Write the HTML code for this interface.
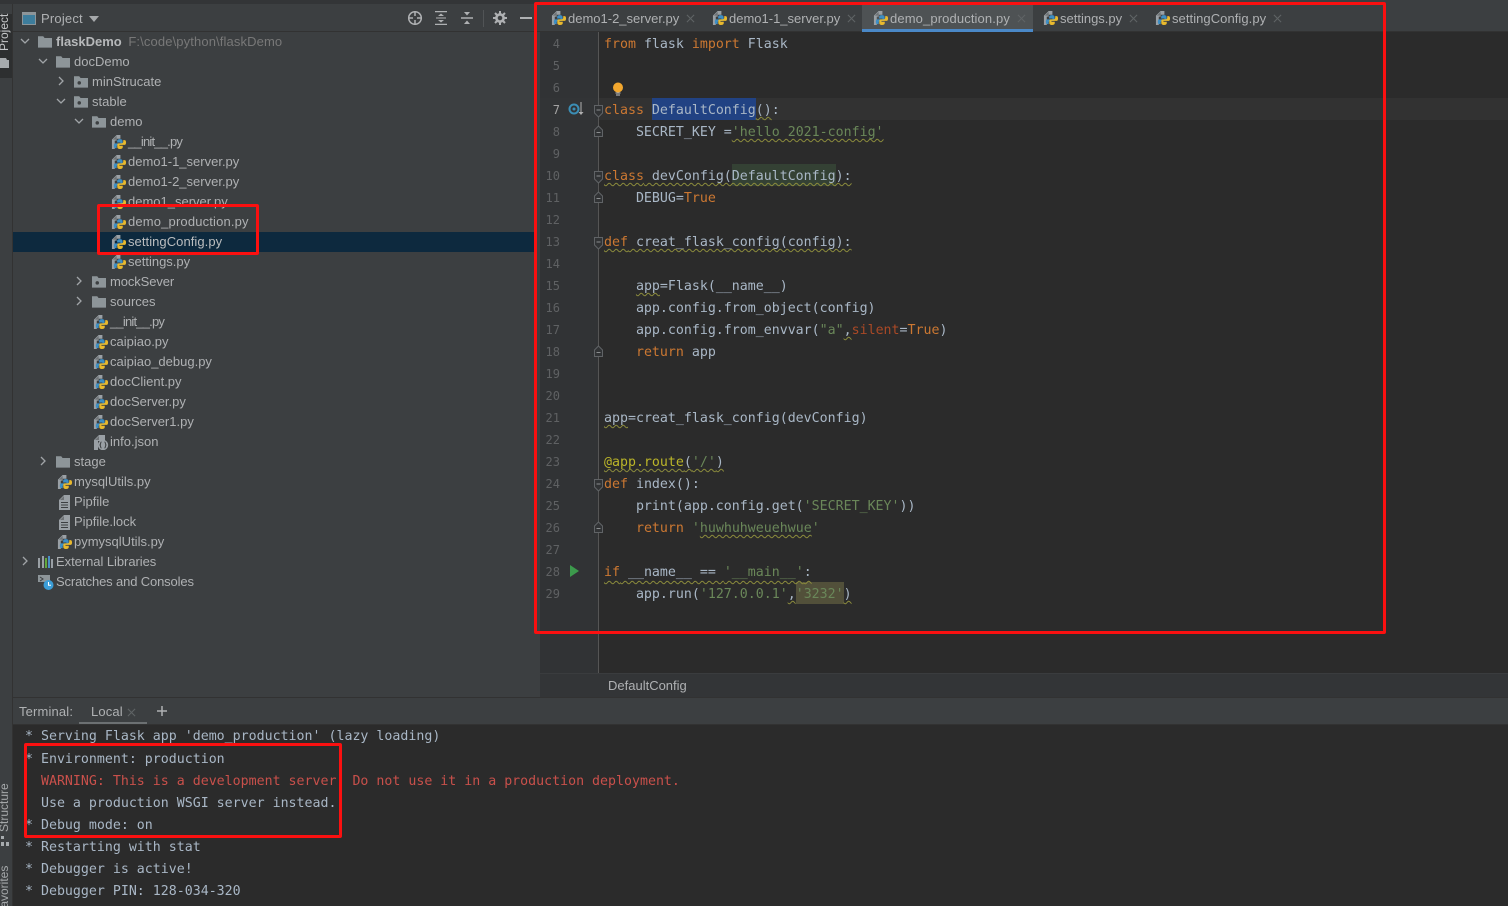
<!DOCTYPE html>
<html><head><meta charset="utf-8"><style>
html,body{margin:0;padding:0;background:#3c3f41}
#r{position:relative;width:1508px;height:906px;overflow:hidden;background:#3c3f41;font-family:"Liberation Sans","Noto Sans CJK SC",sans-serif;font-size:13px;color:#afb1b3}
#r div,#r svg{position:absolute}
.b{left:0;top:0}
.t{white-space:pre;height:20px;line-height:20px;letter-spacing:0;margin-top:1px}
.c{white-space:pre;height:22px;line-height:22px;font-family:"DejaVu Sans Mono","Liberation Mono",monospace;font-size:13.28px;color:#a9b7c6;left:604px;margin-top:2px}
.n{white-space:pre;height:22px;line-height:22px;font-family:"DejaVu Sans Mono","Liberation Mono",monospace;font-size:12px;color:#5f6163;width:20px;text-align:right;left:540px;margin-top:1px}
.m{white-space:pre;height:22px;line-height:22px;font-family:"DejaVu Sans Mono","Liberation Mono",monospace;font-size:13.28px;color:#a9b7c6;left:25px;margin-top:2px}
i{font-style:normal}
.k{color:#cc7832}.s{color:#6a8759}.d{color:#bbb529}.p{color:#aa4926}
.w{text-decoration:underline wavy #8c8c3c 1px;text-underline-offset:2px;text-decoration-skip-ink:none}
.e{color:#c9504b}
</style></head><body><div id="r">
<svg width="0" height="0" class="b"><defs>
<symbol id="py" viewBox="0 0 17 17"><path d="M1 6l5-5h4v4H6v2H4v9H1z" fill="#9aa0a5"/><path d="M2 6h4V2z" fill="#6e7275"/><path d="M9.500 5.500c-2 0-3 .7-3 2V9H10v1H4.500c-.9 0-1.500.9-1.500 2.500S3.600 15 4.500 15H6v-1.800c0-1 .8-1.700 1.800-1.700h3c.9 0 1.500-.7 1.500-1.500V7.500c0-1.300-1.300-2-2.800-2z" fill="#3d8ec4"/><path d="M9.500 16c2 0 3-.7 3-2v-1.500H9v-1h5.500c.9 0 1.500-.9 1.500-2.500s-.6-2.500-1.500-2.500H13v1.800c0 1-.8 1.700-1.800 1.700h-3c-.9 0-1.500.7-1.500 1.500V14c0 1.300 1.300 2 2.800 2z" fill="#e8b92e"/></symbol>
<symbol id="f" viewBox="0 0 16 14"><path d="M0 1h6l1.500 2H16v11H0z" fill="#8d9599"/></symbol>
<symbol id="pk" viewBox="0 0 16 14"><path d="M0 1h6l1.500 2H16v11H0z" fill="#8d9599"/><circle cx="6" cy="8.500" r="2" fill="#3c3f41"/></symbol>
<symbol id="doc" viewBox="0 0 16 16"><path d="M2 6l5-5h6v15H2z" fill="#9aa0a5"/><path d="M3 6h4V2z" fill="#6e7275"/><path d="M4 8h7v1H4zM4 10.500h7v1H4zM4 13h7v1H4z" fill="#3c3f41"/></symbol>
<symbol id="js" viewBox="0 0 16 16"><path d="M1 6l5-5h6v6H5v9H1z" fill="#9aa0a5"/><path d="M2 6h4V2z" fill="#6e7275"/><circle cx="10" cy="11" r="5.200" fill="#9aa0a5"/><path d="M8.500 8c-1.300 0-.6 2.400-1.500 3 .9.600.2 3 1.500 3M11.500 8c1.300 0 .6 2.400 1.500 3-.9.600-.2 3-1.500 3" fill="none" stroke="#3c3f41"/></symbol>
<symbol id="dn" viewBox="0 0 10 10"><path d="M1 3l4 4 4-4" fill="none" stroke="#a0a4a7" stroke-width="1.300"/></symbol>
<symbol id="rt" viewBox="0 0 10 10"><path d="M3 1l4 4-4 4" fill="none" stroke="#a0a4a7" stroke-width="1.300"/></symbol>
<symbol id="x" viewBox="0 0 10 10"><path d="M1 1l8 8M9 1L1 9" stroke="#5f6365" stroke-width="1.200"/></symbol>
<symbol id="fo" viewBox="0 0 12 13"><path d="M1.500 5l4-4 4 4v6.500h-8z" fill="#313335" stroke="#606366"/><path d="M3.500 7.500h4" stroke="#8a8d8f"/></symbol>
<symbol id="fc" viewBox="0 0 12 13"><path d="M1.500 8l4 4 4-4V.5h-8z" fill="#313335" stroke="#606366"/><path d="M3.500 5h4" stroke="#8a8d8f"/></symbol>
</defs></svg>

<!-- left stripe -->
<div style="left:0;top:0;width:12px;height:906px;background:#3c3f41;border-right:1px solid #323232"></div>
<div style="left:0;top:14px;width:12px;height:64px;background:#2d2f30"></div>
<div style="left:-3px;top:51px;transform:rotate(-90deg);transform-origin:0 0;color:#c4c6c8;font-size:12px;line-height:15px;white-space:pre">Project</div>
<svg style="left:0;top:57px" width="9" height="11" viewBox="0 0 9 11"><path d="M0 1h6l1 2h2v8H0z" fill="#a6aaad"/></svg>
<div style="left:-3px;top:832px;transform:rotate(-90deg);transform-origin:0 0;color:#a5a8aa;font-size:12px;line-height:15px;white-space:pre">Structure</div>
<svg style="left:1px;top:836px" width="8" height="10" viewBox="0 0 8 10"><path d="M0 0h3v3H0zM0 6h3v4H0zM5 6h3v4H5z" fill="#a6aaad"/></svg>
<div style="left:-3px;top:915px;transform:rotate(-90deg);transform-origin:0 0;color:#a5a8aa;font-size:12px;line-height:15px;white-space:pre">Favorites</div>
<div style="left:0;top:0;width:540px;height:4px;background:#333537"></div>

<!-- project header -->
<div style="left:13px;top:31px;width:527px;height:1px;background:#323232"></div>
<svg style="left:22px;top:12px" width="14" height="13" viewBox="0 0 14 13"><rect x=".5" y=".5" width="13" height="12" fill="#3d7d9c" stroke="#8d9599"/><rect x="1" y="1" width="12" height="2" fill="#8d9599"/></svg>
<div class="t" style="left:41px;top:8px;letter-spacing:.2px">Project</div>
<svg style="left:89px;top:16px" width="10" height="6" viewBox="0 0 10 6"><path d="M0 0h10L5 6z" fill="#a6a9ab"/></svg>
<svg style="left:407px;top:10px" width="16" height="16" viewBox="0 0 16 16"><circle cx="8" cy="8" r="6.300" fill="none" stroke="#afb1b3" stroke-width="1.500"/><path d="M8 1v5M8 10v5M1 8h5M10 8h5" stroke="#afb1b3" stroke-width="1.500"/></svg>
<svg style="left:435px;top:11px" width="12" height="14" viewBox="0 0 12 14"><path d="M0 .5h12M0 13.500h12" stroke="#afb1b3" stroke-width="1.500"/><path d="M3 5l3-2.500L9 5zM3 9l3 2.500L9 9z" fill="#afb1b3"/><path d="M1 7h10" stroke="#afb1b3"/></svg>
<svg style="left:461px;top:11px" width="12" height="14" viewBox="0 0 12 14"><path d="M0 7h12" stroke="#afb1b3" stroke-width="1.500"/><path d="M3 1l3 3.500L9 1zM3 13l3-3.500L9 13z" fill="#afb1b3"/></svg>
<div style="left:483px;top:10px;width:1px;height:17px;background:#515456"></div>
<svg style="left:493px;top:11px" width="14" height="14" viewBox="0 0 14 14"><circle cx="7" cy="7" r="3.600" fill="none" stroke="#afb1b3" stroke-width="2.600"/><path d="M7 0v3M7 11v3M0 7h3M11 7h3M2 2l2 2M10 10l2 2M12 2l-2 2M4 10l-2 2" stroke="#afb1b3" stroke-width="2"/></svg>
<div style="left:520px;top:17px;width:12px;height:2px;background:#afb1b3"></div>

<!-- tree -->
<div style="left:13px;top:232px;width:524px;height:20px;background:#0d293e"></div>
<svg style="left:20px;top:36px" width="10" height="10"><use href="#dn"/></svg>
<svg style="left:38px;top:35px" width="14" height="13"><use href="#f"/></svg>
<div class="t" style="left:56px;top:31px"><b style="color:#b6b8ba;letter-spacing:0">flaskDemo</b> <span style="color:#787878;letter-spacing:.12px;margin-left:3px">F:\code\python\flaskDemo</span></div>
<svg style="left:38px;top:56px" width="10" height="10"><use href="#dn"/></svg>
<svg style="left:56px;top:55px" width="14" height="13"><use href="#f"/></svg>
<div class="t" style="left:74px;top:51px">docDemo</div>
<svg style="left:56px;top:76px" width="10" height="10"><use href="#rt"/></svg>
<svg style="left:74px;top:75px" width="14" height="13"><use href="#pk"/></svg>
<div class="t" style="left:92px;top:71px">minStrucate</div>
<svg style="left:56px;top:96px" width="10" height="10"><use href="#dn"/></svg>
<svg style="left:74px;top:95px" width="14" height="13"><use href="#pk"/></svg>
<div class="t" style="left:92px;top:91px">stable</div>
<svg style="left:74px;top:116px" width="10" height="10"><use href="#dn"/></svg>
<svg style="left:92px;top:115px" width="14" height="13"><use href="#pk"/></svg>
<div class="t" style="left:110px;top:111px">demo</div>
<svg style="left:111px;top:134px" width="16" height="16"><use href="#py"/></svg>
<div class="t" style="left:128px;top:131px;letter-spacing:-.8px">__init__.py</div>
<svg style="left:111px;top:154px" width="16" height="16"><use href="#py"/></svg>
<div class="t" style="left:128px;top:151px">demo1-1_server.py</div>
<svg style="left:111px;top:174px" width="16" height="16"><use href="#py"/></svg>
<div class="t" style="left:128px;top:171px">demo1-2_server.py</div>
<svg style="left:111px;top:194px" width="16" height="16"><use href="#py"/></svg>
<div class="t" style="left:128px;top:191px">demo1_server.py</div>
<svg style="left:111px;top:214px" width="16" height="16"><use href="#py"/></svg>
<div class="t" style="left:128px;top:211px;letter-spacing:.16px">demo_production.py</div>
<svg style="left:111px;top:234px" width="16" height="16"><use href="#py"/></svg>
<div class="t" style="left:128px;top:231px;color:#bbbdbf;letter-spacing:.06px">settingConfig.py</div>
<svg style="left:111px;top:254px" width="16" height="16"><use href="#py"/></svg>
<div class="t" style="left:128px;top:251px">settings.py</div>
<svg style="left:74px;top:276px" width="10" height="10"><use href="#rt"/></svg>
<svg style="left:92px;top:275px" width="14" height="13"><use href="#pk"/></svg>
<div class="t" style="left:110px;top:271px;letter-spacing:-.1px">mockSever</div>
<svg style="left:74px;top:296px" width="10" height="10"><use href="#rt"/></svg>
<svg style="left:92px;top:295px" width="14" height="13"><use href="#f"/></svg>
<div class="t" style="left:110px;top:291px">sources</div>
<svg style="left:93px;top:314px" width="16" height="16"><use href="#py"/></svg>
<div class="t" style="left:110px;top:311px;letter-spacing:-.8px">__init__.py</div>
<svg style="left:93px;top:334px" width="16" height="16"><use href="#py"/></svg>
<div class="t" style="left:110px;top:331px">caipiao.py</div>
<svg style="left:93px;top:354px" width="16" height="16"><use href="#py"/></svg>
<div class="t" style="left:110px;top:351px">caipiao_debug.py</div>
<svg style="left:93px;top:374px" width="16" height="16"><use href="#py"/></svg>
<div class="t" style="left:110px;top:371px">docClient.py</div>
<svg style="left:93px;top:394px" width="16" height="16"><use href="#py"/></svg>
<div class="t" style="left:110px;top:391px">docServer.py</div>
<svg style="left:93px;top:414px" width="16" height="16"><use href="#py"/></svg>
<div class="t" style="left:110px;top:411px">docServer1.py</div>
<svg style="left:93px;top:434px" width="16" height="16"><use href="#js"/></svg>
<div class="t" style="left:110px;top:431px">info.json</div>
<svg style="left:38px;top:456px" width="10" height="10"><use href="#rt"/></svg>
<svg style="left:56px;top:455px" width="14" height="13"><use href="#f"/></svg>
<div class="t" style="left:74px;top:451px">stage</div>
<svg style="left:57px;top:474px" width="16" height="16"><use href="#py"/></svg>
<div class="t" style="left:74px;top:471px">mysqlUtils.py</div>
<svg style="left:57px;top:494px" width="16" height="16"><use href="#doc"/></svg>
<div class="t" style="left:74px;top:491px">Pipfile</div>
<svg style="left:57px;top:514px" width="16" height="16"><use href="#doc"/></svg>
<div class="t" style="left:74px;top:511px">Pipfile.lock</div>
<svg style="left:57px;top:534px" width="16" height="16"><use href="#py"/></svg>
<div class="t" style="left:74px;top:531px">pymysqlUtils.py</div>
<svg style="left:20px;top:556px" width="10" height="10"><use href="#rt"/></svg>
<svg style="left:38px;top:555px" width="15" height="13" viewBox="0 0 15 13"><path d="M0 3h2v10H0z" fill="#9aa0a5"/><path d="M4 1h2v12H4z" fill="#9aa0a5"/><path d="M7 3h2v10H7z" fill="#62a83e"/><path d="M10 1h2v12h-2z" fill="#4b8fc5"/><path d="M13 4h2v9h-2z" fill="#9aa0a5"/></svg>
<div class="t" style="left:56px;top:551px;letter-spacing:-.05px">External Libraries</div>
<svg style="left:38px;top:574px" width="16" height="16" viewBox="0 0 16 16"><path d="M0 1h12v7H0z" fill="#8d9599"/><path d="M2 3l3 2-3 2" fill="none" stroke="#3c3f41"/><circle cx="10.500" cy="11" r="5" fill="#3b9ed8"/><path d="M10.500 8v3.300h2.500" fill="none" stroke="#fff"/></svg>
<div class="t" style="left:56px;top:571px;letter-spacing:-.14px">Scratches and Consoles</div>

<!-- editor -->
<div style="left:540px;top:32px;width:968px;height:641px;background:#2b2b2b"></div>
<div style="left:540px;top:32px;width:58px;height:641px;background:#313335"></div>
<div style="left:598px;top:32px;width:1px;height:641px;background:#555"></div>
<div style="left:540px;top:31px;width:968px;height:1px;background:#323232"></div>
<div style="left:540px;top:98px;width:58px;height:22px;background:#323436"></div>
<div style="left:599px;top:98px;width:909px;height:22px;background:#323232"></div>
<div style="left:652px;top:98px;width:104px;height:22px;background:#214283"></div>
<div style="left:732px;top:164px;width:104px;height:22px;background:#344134"></div>
<div style="left:796px;top:582px;width:48px;height:22px;background:#52503a"></div>

<div class="n" style="top:32px">4</div>
<div class="n" style="top:54px">5</div>
<div class="n" style="top:76px">6</div>
<div class="n" style="top:98px;color:#a4a3a3">7</div>
<div class="n" style="top:120px">8</div>
<div class="n" style="top:142px">9</div>
<div class="n" style="top:164px">10</div>
<div class="n" style="top:186px">11</div>
<div class="n" style="top:208px">12</div>
<div class="n" style="top:230px">13</div>
<div class="n" style="top:252px">14</div>
<div class="n" style="top:274px">15</div>
<div class="n" style="top:296px">16</div>
<div class="n" style="top:318px">17</div>
<div class="n" style="top:340px">18</div>
<div class="n" style="top:362px">19</div>
<div class="n" style="top:384px">20</div>
<div class="n" style="top:406px">21</div>
<div class="n" style="top:428px">22</div>
<div class="n" style="top:450px">23</div>
<div class="n" style="top:472px">24</div>
<div class="n" style="top:494px">25</div>
<div class="n" style="top:516px">26</div>
<div class="n" style="top:538px">27</div>
<div class="n" style="top:560px">28</div>
<div class="n" style="top:582px">29</div>

<svg style="left:612px;top:82px" width="12" height="15" viewBox="0 0 12 15"><circle cx="6" cy="5.500" r="5" fill="#f2a72e"/><path d="M3.500 11h5M4 13h4" stroke="#c9c9c9"/></svg>
<svg style="left:568px;top:102px" width="16" height="14" viewBox="0 0 16 14"><circle cx="6" cy="7" r="4.500" fill="none" stroke="#3b8eb5" stroke-width="2"/><circle cx="6" cy="7" r="1.500" fill="#3b8eb5"/><path d="M13 0v10" stroke="#b0b0b0"/><path d="M10.500 10h5L13 13z" fill="#b0b0b0"/></svg>
<svg style="left:569px;top:565px" width="11" height="12" viewBox="0 0 11 12"><path d="M1 0l9 6-9 6z" fill="#3c9a4c"/></svg>
<svg style="left:593px;top:105px" width="12" height="13"><use href="#fc"/></svg>
<svg style="left:593px;top:125px" width="12" height="13"><use href="#fo"/></svg>
<svg style="left:593px;top:171px" width="12" height="13"><use href="#fc"/></svg>
<svg style="left:593px;top:191px" width="12" height="13"><use href="#fo"/></svg>
<svg style="left:593px;top:237px" width="12" height="13"><use href="#fc"/></svg>
<svg style="left:593px;top:345px" width="12" height="13"><use href="#fo"/></svg>
<svg style="left:593px;top:479px" width="12" height="13"><use href="#fc"/></svg>
<svg style="left:593px;top:521px" width="12" height="13"><use href="#fo"/></svg>

<div class="c" style="top:32px"><i class="k">from</i> flask <i class="k">import</i> Flask</div>
<div class="c" style="top:98px"><i class="k">class</i> DefaultConfig<i class="w">()</i>:</div>
<div class="c" style="top:120px">    SECRET_KEY =<i class="s w">'hello 2021-config'</i></div>
<div class="c" style="top:164px"><i class="w"><i class="k">class</i> devConfig(DefaultConfig):</i></div>
<div class="c" style="top:186px">    DEBUG=<i class="k">True</i></div>
<div class="c" style="top:230px"><i class="w"><i class="k">def</i> creat_flask_config(config):</i></div>
<div class="c" style="top:274px">    <i class="w">app</i>=Flask(__name__)</div>
<div class="c" style="top:296px">    app.config.from_object(config)</div>
<div class="c" style="top:318px">    app.config.from_envvar(<i class="s">"a"</i><i class="w">,</i><i class="p">silent</i>=<i class="k">True</i>)</div>
<div class="c" style="top:340px">    <i class="k">return</i> app</div>
<div class="c" style="top:406px"><i class="w">app</i>=creat_flask_config(devConfig)</div>
<div class="c" style="top:450px"><i class="d w">@app.route</i><i class="w">(<i class="s">'/'</i>)</i></div>
<div class="c" style="top:472px"><i class="k">def</i> index():</div>
<div class="c" style="top:494px">    print(app.config.get(<i class="s">'SECRET_KEY'</i>))</div>
<div class="c" style="top:516px">    <i class="k">return</i> <i class="s">'<i class="w">huwhuhweuehwue</i>'</i></div>
<div class="c" style="top:560px"><i class="w" style="text-underline-offset:4px"><i class="k">if</i> __name__ == <i class="s">'__main__'</i>:</i></div>
<div class="c" style="top:582px">    app.run(<i class="s">'127.0.0.1'</i><i class="w">,</i><i class="s">'3232'</i><i class="w">)</i></div>

<!-- tabs -->
<div style="left:862px;top:4px;width:171px;height:25px;background:#4e5254"></div>
<div style="left:862px;top:29px;width:171px;height:3px;background:#4a88c7"></div>
<svg style="left:551px;top:10px" width="16" height="16"><use href="#py"/></svg>
<div class="t" style="left:568px;top:8px">demo1-2_server.py</div>
<svg style="left:686px;top:14px" width="9" height="9"><use href="#x"/></svg>
<svg style="left:712px;top:10px" width="16" height="16"><use href="#py"/></svg>
<div class="t" style="left:729px;top:8px">demo1-1_server.py</div>
<svg style="left:847px;top:14px" width="9" height="9"><use href="#x"/></svg>
<svg style="left:873px;top:10px" width="16" height="16"><use href="#py"/></svg>
<div class="t" style="left:890px;top:8px;letter-spacing:.12px">demo_production.py</div>
<svg style="left:1017px;top:14px" width="9" height="9"><use href="#x"/></svg>
<svg style="left:1043px;top:10px" width="16" height="16"><use href="#py"/></svg>
<div class="t" style="left:1060px;top:8px">settings.py</div>
<svg style="left:1129px;top:14px" width="9" height="9"><use href="#x"/></svg>
<svg style="left:1155px;top:10px" width="16" height="16"><use href="#py"/></svg>
<div class="t" style="left:1172px;top:8px;letter-spacing:.06px">settingConfig.py</div>
<svg style="left:1273px;top:14px" width="9" height="9"><use href="#x"/></svg>

<!-- breadcrumb -->
<div style="left:540px;top:673px;width:968px;height:24px;background:#333537;border-top:1px solid #3a3c3e;box-sizing:border-box"></div>
<div class="t" style="left:608px;top:675px">DefaultConfig</div>

<!-- terminal -->
<div style="left:13px;top:697px;width:1495px;height:1px;background:#323232"></div>
<div class="t" style="left:19px;top:701px;letter-spacing:.15px">Terminal:</div>
<div class="t" style="left:91px;top:701px;letter-spacing:.15px">Local</div>
<svg style="left:127px;top:708px" width="9" height="9"><use href="#x"/></svg>
<div style="left:79px;top:722px;width:68px;height:3px;background:#6c7072"></div>
<svg style="left:157px;top:706px" width="10" height="10" viewBox="0 0 10 10"><path d="M5 0v10M0 5h10" stroke="#afb1b3" stroke-width="1.500"/></svg>
<div style="left:13px;top:724px;width:1495px;height:182px;background:#2b2b2b;border-top:1px solid #323232;box-sizing:border-box"></div>
<div class="m" style="top:724px">* Serving Flask app 'demo_production' (lazy loading)</div>
<div class="m" style="top:747px">* Environment: production</div>
<div class="m e" style="top:769px">  WARNING: This is a development server. Do not use it in a production deployment.</div>
<div class="m" style="top:791px">  Use a production WSGI server instead.</div>
<div class="m" style="top:813px">* Debug mode: on</div>
<div class="m" style="top:835px">* Restarting with stat</div>
<div class="m" style="top:857px">* Debugger is active!</div>
<div class="m" style="top:879px">* Debugger PIN: 128-034-320</div>

<!-- red annotations -->
<div style="left:534px;top:2px;width:852px;height:632px;border:3px solid #fb1010;border-radius:2px;box-sizing:border-box"></div>
<div style="left:97px;top:204px;width:162px;height:51px;border:3px solid #fb1010;border-radius:2px;box-sizing:border-box"></div>
<div style="left:24px;top:743px;width:318px;height:95px;border:3px solid #fb1010;border-radius:2px;box-sizing:border-box"></div>
</div></body></html>
